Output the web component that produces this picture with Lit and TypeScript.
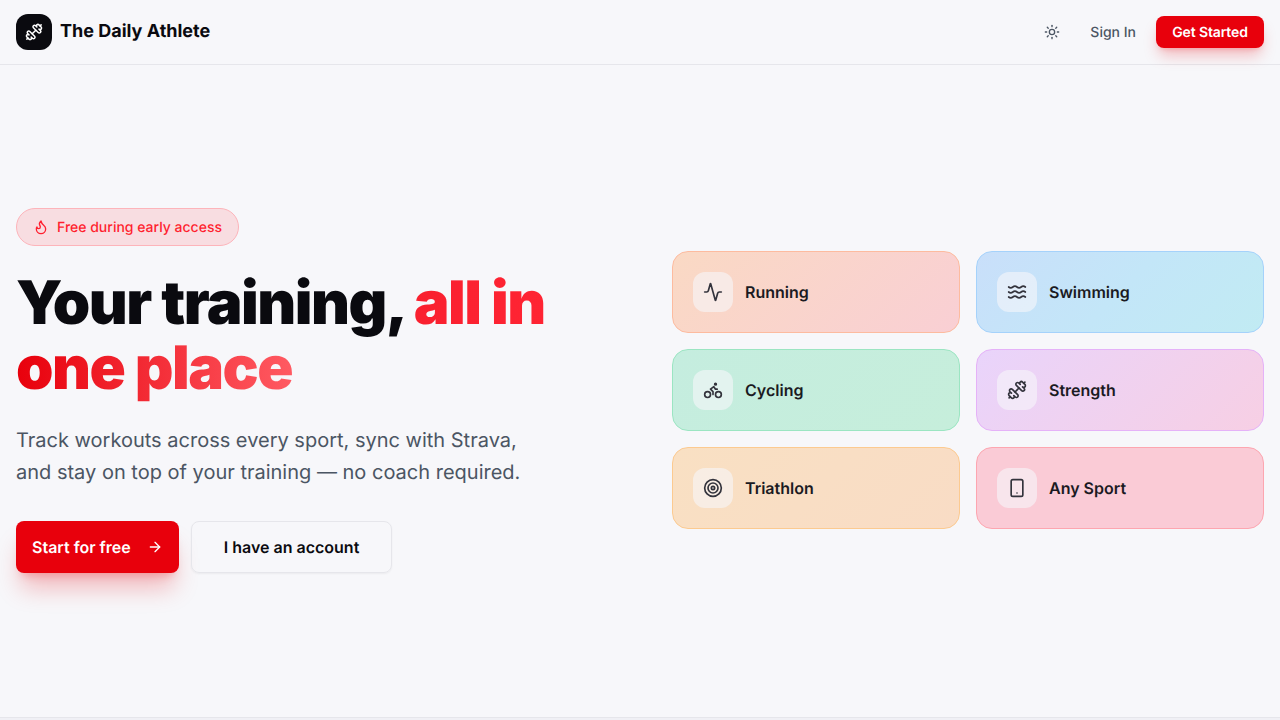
import { LitElement, html, css, svg } from 'lit';
import { customElement } from 'lit/decorators.js';

const ICONS = {
  dumbbell: svg`<g transform="matrix(-1 0 0 1 24 0)"><path d="M14.4 14.4 9.6 9.6"/><path d="M18.657 21.485a2 2 0 1 1-2.829-2.828l-1.767 1.768a2 2 0 1 1-2.829-2.829l6.364-6.364a2 2 0 1 1 2.829 2.829l-1.768 1.767a2 2 0 1 1 2.828 2.829z"/><path d="m21.5 21.5-1.4-1.4"/><path d="M3.9 3.9 2.5 2.5"/><path d="M6.404 12.768a2 2 0 1 1-2.829-2.829l1.768-1.767a2 2 0 1 1-2.828-2.829l2.828-2.828a2 2 0 1 1 2.829 2.828l1.767-1.768a2 2 0 1 1 2.829 2.829z"/></g>`,
  sun: svg`<circle cx="12" cy="12" r="4"/><path d="M12 2v2"/><path d="M12 20v2"/><path d="m4.93 4.93 1.41 1.41"/><path d="m17.66 17.66 1.41 1.41"/><path d="M2 12h2"/><path d="M20 12h2"/><path d="m6.34 17.66-1.41 1.41"/><path d="m19.07 4.93-1.41 1.41"/>`,
  flame: svg`<path d="M8.5 14.5A2.5 2.5 0 0 0 11 12c0-1.38-.5-2-1-3-1.072-2.143-.224-4.054 2-6 .5 2.5 2 4.9 4 6.5 2 1.6 3 3.5 3 5.5a7 7 0 1 1-14 0c0-1.153.433-2.294 1-3a2.5 2.5 0 0 0 2.5 2.5z"/>`,
  arrow: svg`<path d="M5 12h14"/><path d="m12 5 7 7-7 7"/>`,
  activity: svg`<path d="M22 12h-2.48a2 2 0 0 0-1.93 1.46l-2.35 8.36a.25.25 0 0 1-.48 0L9.24 2.18a.25.25 0 0 0-.48 0l-2.35 8.36A2 2 0 0 1 4.49 12H2"/>`,
  waves: svg`<path d="M2 6c.6.5 1.2 1 2.5 1C7 7 7 5 9.5 5c2.6 0 2.4 2 5 2 2.5 0 2.5-2 5-2 1.3 0 1.9.5 2.5 1"/><path d="M2 12c.6.5 1.2 1 2.5 1 2.5 0 2.5-2 5-2 2.6 0 2.4 2 5 2 2.5 0 2.5-2 5-2 1.3 0 1.9.5 2.5 1"/><path d="M2 18c.6.5 1.2 1 2.5 1 2.5 0 2.5-2 5-2 2.6 0 2.4 2 5 2 2.5 0 2.5-2 5-2 1.3 0 1.9.5 2.5 1"/>`,
  bike: svg`<circle cx="18.5" cy="17.5" r="3.5"/><circle cx="5.5" cy="17.5" r="3.5"/><circle cx="15" cy="5" r="1"/><path d="M12 17.5V14l-3-3 4-3 2 3h2"/>`,
  target: svg`<circle cx="12" cy="12" r="10"/><circle cx="12" cy="12" r="6"/><circle cx="12" cy="12" r="2"/>`,
  phone: svg`<rect width="14" height="20" x="5" y="2" rx="2" ry="2"/><path d="M12 18h.01"/>`,
};

const icon = (name: keyof typeof ICONS, size: number) => html`
  <svg width=${size} height=${size} viewBox="0 0 24 24" fill="none" stroke="currentColor"
    stroke-width="2" stroke-linecap="round" stroke-linejoin="round">${ICONS[name]}</svg>
`;

const SPORTS: { label: string; icon: keyof typeof ICONS; tone: string }[] = [
  { label: 'Running', icon: 'activity', tone: 'running' },
  { label: 'Swimming', icon: 'waves', tone: 'swimming' },
  { label: 'Cycling', icon: 'bike', tone: 'cycling' },
  { label: 'Strength', icon: 'dumbbell', tone: 'strength' },
  { label: 'Triathlon', icon: 'target', tone: 'triathlon' },
  { label: 'Any Sport', icon: 'phone', tone: 'any' },
];

@customElement('app-root')
export class AppRoot extends LitElement {
  static styles = css`
    :host {
      display: flex;
      flex-direction: column;
      height: 720px;
      overflow: hidden;
      background: #f7f7fa;
      color: #0a0a0f;
      font-family: Inter, 'Liberation Sans', sans-serif;
      text-rendering: geometricPrecision;
    }
    svg {
      display: block;
      flex: none;
    }
    header {
      flex: none;
      height: 64px;
      box-sizing: content-box;
      border-bottom: 1px solid #e6e6eb;
      padding: 0 16px;
      display: flex;
      align-items: center;
      justify-content: space-between;
    }
    .brand {
      display: flex;
      align-items: center;
      gap: 8px;
      font-size: 18px;
      line-height: 28px;
      font-weight: 700;
    }
    .logo {
      width: 36px;
      height: 36px;
      border-radius: 12px;
      background: #0a0a0f;
      color: #fff;
      display: flex;
      align-items: center;
      justify-content: center;
    }
    .actions {
      display: flex;
      align-items: center;
      font-size: 14px;
      line-height: 21px;
    }
    .theme {
      width: 36px;
      display: flex;
      justify-content: center;
      color: #4b5563;
      margin-right: 20px;
    }
    .signin {
      font-weight: 500;
      color: #4b5563;
      margin-right: 20px;
    }
    .started {
      height: 32px;
      width: 108px;
      border-radius: 8px;
      background: #e8000c;
      color: #fff;
      font-weight: 600;
      letter-spacing: -0.14px;
      display: flex;
      align-items: center;
      justify-content: center;
      box-shadow: 0 10px 15px -3px rgba(232, 0, 12, 0.25), 0 4px 6px -4px rgba(232, 0, 12, 0.25);
    }
    main {
      flex: none;
      height: 652px;
      box-sizing: border-box;
      padding: 0 16px 2px;
      display: grid;
      grid-template-columns: 1fr 1fr;
      column-gap: 64px;
      align-items: center;
    }
    .badge {
      display: flex;
      width: fit-content;
      align-items: center;
      gap: 8px;
      height: 38px;
      box-sizing: border-box;
      padding: 1px 16px 0;
      border-radius: 999px;
      border: 1px solid #fdb4ba;
      background: #f8dde1;
      color: #ff1f2f;
      font-size: 14px;
      line-height: 21px;
      font-weight: 500;
    }
    h1 {
      margin: 25px 0 0;
      font-size: 60px;
      line-height: 65.5px;
      font-weight: 900;
      letter-spacing: -1.5px;
      color: #0a0a0f;
    }
    .accent-a,
    .accent-b {
      -webkit-background-clip: text;
      background-clip: text;
      color: transparent;
    }
    .accent-a {
      background-image: linear-gradient(90deg, #f9202f, #ff2433);
    }
    .accent-b {
      background-image: linear-gradient(90deg, #e8000c, #ff5a62);
    }
    p {
      margin: 22px 0 0;
      font-size: 20px;
      line-height: 32px;
      color: #4b5563;
    }
    .cta {
      display: flex;
      gap: 12px;
      margin-top: 33px;
    }
    .btn {
      height: 52px;
      box-sizing: border-box;
      border-radius: 8px;
      font-size: 16px;
      line-height: 24px;
      font-weight: 600;
      display: flex;
      align-items: center;
      justify-content: center;
    }
    .primary {
      width: 163px;
      padding: 0 16px;
      justify-content: flex-start;
      gap: 16px;
      background: #e8000c;
      color: #fff;
      box-shadow: 0 20px 25px -5px rgba(232, 0, 12, 0.25), 0 8px 10px -6px rgba(232, 0, 12, 0.25);
    }
    .secondary {
      width: 201px;
      border: 1px solid #e6e6eb;
      color: #0a0a0f;
      box-shadow: 0 1px 2px rgba(10, 10, 15, 0.05);
    }
    .sports {
      display: grid;
      grid-template-columns: 1fr 1fr;
      gap: 16px;
    }
    .sport {
      height: 82px;
      box-sizing: border-box;
      padding: 0 20px;
      border: 1px solid;
      border-radius: 16px;
      display: flex;
      align-items: center;
      gap: 12px;
      font-size: 16px;
      line-height: 24px;
      font-weight: 600;
      color: #1a1a22;
    }
    .tile {
      width: 40px;
      height: 40px;
      border-radius: 12px;
      background: rgba(247, 247, 250, 0.6);
      color: #33333c;
      display: flex;
      align-items: center;
      justify-content: center;
    }
    .running {
      background: linear-gradient(135deg, #fad9c4, #f9cfd4);
      border-color: #fdbb9f;
    }
    .swimming {
      background: linear-gradient(135deg, #c9dffa, #c3e6f8 50%, #c1ebf3);
      border-color: #a5d2fb;
    }
    .cycling {
      background: linear-gradient(135deg, #c5eddf, #c6eedb);
      border-color: #9be5c2;
    }
    .strength {
      background: linear-gradient(135deg, #e9d4fb, #f7cfe4);
      border-color: #e5b2f8;
    }
    .triathlon {
      background: linear-gradient(135deg, #f9e0c3, #f9dcc5);
      border-color: #fcca90;
    }
    .any {
      background: #facbd6;
      border-color: #fda6b0;
    }
    footer {
      flex: 1;
      border-top: 1px solid #e6e6eb;
      background: #f0f0f5;
    }
  `;

  render() {
    return html`
      <header>
        <div class="brand">
          <span class="logo">${icon('dumbbell', 18)}</span>
          The Daily Athlete
        </div>
        <div class="actions">
          <span class="theme">${icon('sun', 16)}</span>
          <span class="signin">Sign In</span>
          <span class="started">Get Started</span>
        </div>
      </header>
      <main>
        <section>
          <span class="badge">${icon('flame', 16)} Free during early access</span>
          <h1>Your training, <span class="accent-a">all in</span> <span class="accent-b">one place</span></h1>
          <p>Track workouts across every sport, sync with Strava,<br />and stay on top of your training — no coach required.</p>
          <div class="cta">
            <span class="btn primary">Start for free ${icon('arrow', 16)}</span>
            <span class="btn secondary">I have an account</span>
          </div>
        </section>
        <section class="sports">
          ${SPORTS.map(
            (s) => html`
              <div class="sport ${s.tone}">
                <span class="tile">${icon(s.icon, 20)}</span>
                ${s.label}
              </div>
            `,
          )}
        </section>
      </main>
      <footer></footer>
    `;
  }
}
